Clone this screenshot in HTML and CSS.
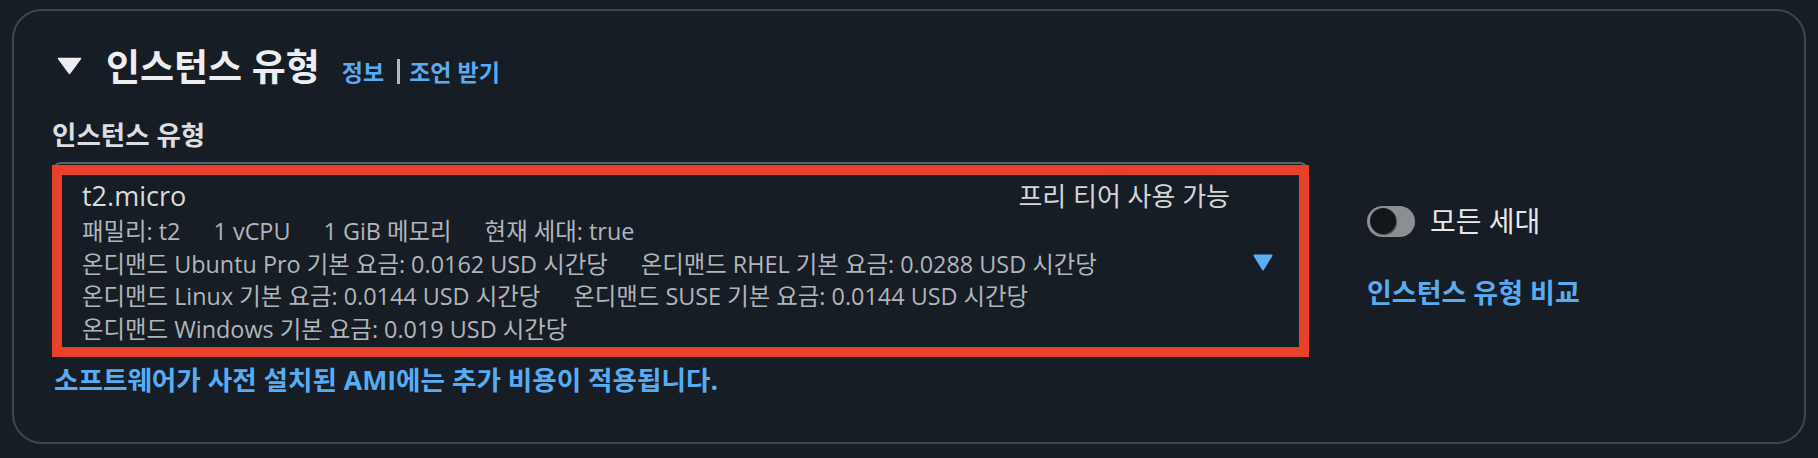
FILE: index.html
```html
<!DOCTYPE html>
<html lang="ko">
<head>
<meta charset="utf-8">
<title>인스턴스 유형</title>
<link rel="stylesheet" href="styles.css">
</head>
<body>
<section class="card">
  <div class="header">
    <svg class="expand-icon" width="25" height="18" viewBox="0 0 25 18"><path d="M1.5 1.5h22L12.5 16.5z" fill="#eceef1" stroke="#eceef1" stroke-width="1.5" stroke-linejoin="round"/></svg>
    <h2 class="title">인스턴스 유형</h2>
    <span class="links"><a class="link">정보</a><span class="sep"></span><a class="link">조언 받기</a></span>
  </div>
  <div class="label">인스턴스 유형</div>
  <div class="row">
    <div class="select">
      <div class="select-main">
        <div class="select-top">
          <span class="name">t2.micro</span>
          <span class="tier">프리 티어 사용 가능</span>
        </div>
        <div class="details">
          <div class="line"><span>패밀리: t2</span><span>1 vCPU</span><span>1 GiB 메모리</span><span>현재 세대: true</span></div>
          <div class="line"><span>온디맨드 Ubuntu Pro 기본 요금: 0.0162 USD 시간당</span><span>온디맨드 RHEL 기본 요금: 0.0288 USD 시간당</span></div>
          <div class="line"><span>온디맨드 Linux 기본 요금: 0.0144 USD 시간당</span><span>온디맨드 SUSE 기본 요금: 0.0144 USD 시간당</span></div>
          <div class="line"><span>온디맨드 Windows 기본 요금: 0.019 USD 시간당</span></div>
        </div>
      </div>
      <svg class="caret" width="20" height="17" viewBox="0 0 20 17"><path d="M1.5 1.5h17L10 15.5z" fill="#5aaef6" stroke="#5aaef6" stroke-width="2" stroke-linejoin="round"/></svg>
    </div>
    <div class="side">
      <div class="toggle-row">
        <span class="toggle"><span class="knob"></span></span>
        <span class="toggle-label">모든 세대</span>
      </div>
      <a class="compare">인스턴스 유형 비교</a>
    </div>
  </div>
  <p class="note">소프트웨어가 사전 설치된 AMI에는 추가 비용이 적용됩니다.</p>
</section>
</body>
</html>
```

FILE: styles.css
```css
html, body {
  margin: 0;
  background: #171d25;
}

body {
  font-family: "Open Sans", "Noto Sans CJK KR", sans-serif;
  color: #e6e8eb;
}

.card {
  margin: 9px 12px 0 12px;
  border: 2px solid #40454e;
  border-radius: 30px;
  padding: 36px 38px 46px 38px;
}

.header {
  display: flex;
  align-items: center;
  height: 40px;
}

.expand-icon {
  margin-left: 5px;
  margin-right: 24px;
  margin-top: -2px;
  flex: none;
}

.title {
  margin: 0;
  font-size: 37px;
  line-height: 40px;
  font-weight: 700;
  color: #eceef1;
}

.links {
  display: inline-flex;
  align-items: center;
  margin-left: 22px;
  margin-top: 9px;
  font-size: 23px;
  line-height: 28px;
  font-weight: 700;
}

.link {
  color: #58acf4;
}

.sep {
  display: inline-block;
  width: 3px;
  height: 25px;
  background: #b3b9c2;
  margin: 0 9px 0 13px;
}

.label {
  margin-top: 32px;
  font-size: 26.5px;
  line-height: 32px;
  font-weight: 700;
  color: #dcdee2;
}

.row {
  display: flex;
  align-items: flex-start;
  margin-top: 11px;
}

.select {
  position: relative;
  display: flex;
  align-items: center;
  flex: 0 0 1257px;
  box-sizing: border-box;
  border: 2px solid #5c636d;
  border-radius: 9px;
  padding: 15px 34px 10px 28px;
}

.select::after {
  content: "";
  position: absolute;
  top: 1px;
  left: -2px;
  right: -2px;
  bottom: -2px;
  border: 10px solid #e9402a;
  pointer-events: none;
}

.select-main {
  flex: 1;
  min-width: 0;
}

.select-top {
  display: flex;
  justify-content: space-between;
  align-items: center;
  height: 34px;
}

.name {
  font-size: 27px;
  line-height: 34px;
  color: #d8dbdf;
}

.tier {
  font-size: 26px;
  line-height: 34px;
  color: #d4d6da;
}

.details {
  margin-top: 2px;
}

.line {
  display: flex;
  gap: 33px;
  font-size: 23.4px;
  line-height: 32.5px;
  color: #b1b5bc;
  white-space: nowrap;
}

.caret {
  flex: none;
  margin-left: 23px;
}

.side {
  margin-left: 58px;
  padding-top: 43px;
}

.toggle-row {
  display: flex;
  align-items: center;
  height: 32px;
}

.toggle {
  display: inline-flex;
  align-items: center;
  width: 48px;
  height: 31px;
  border-radius: 16px;
  background: #8d8e93;
  box-sizing: border-box;
  padding-left: 3px;
}

.knob {
  width: 26px;
  height: 26px;
  border-radius: 50%;
  background: #13171c;
  box-shadow: 1px 1px 1px rgba(40, 42, 46, 0.7);
}

.toggle-label {
  margin-left: 15px;
  font-size: 28px;
  line-height: 32px;
  color: #e8e9eb;
}

.compare {
  display: block;
  margin-top: 40px;
  font-size: 27px;
  line-height: 32px;
  font-weight: 700;
  color: #58acf4;
}

.note {
  margin: 7px 0 0 2px;
  font-size: 26.6px;
  line-height: 32px;
  font-weight: 700;
  color: #58acf4;
}
```
